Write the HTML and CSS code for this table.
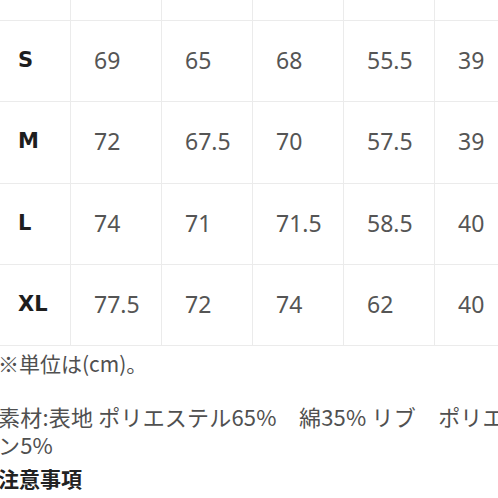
FILE: index.html
```html
<!DOCTYPE html>
<html lang="ja">
<head>
<meta charset="utf-8">
<title>サイズ表</title>
<link rel="stylesheet" href="styles.css">
</head>
<body>
<div class="sheet">
  <div class="size-table">
    <div class="row head">
      <div class="cell"></div><div class="cell"></div><div class="cell"></div><div class="cell"></div><div class="cell"></div><div class="cell"></div>
    </div>
    <div class="row">
      <div class="cell size">S</div><div class="cell">69</div><div class="cell">65</div><div class="cell">68</div><div class="cell">55.5</div><div class="cell">39</div>
    </div>
    <div class="row">
      <div class="cell size">M</div><div class="cell">72</div><div class="cell">67.5</div><div class="cell">70</div><div class="cell">57.5</div><div class="cell">39</div>
    </div>
    <div class="row">
      <div class="cell size">L</div><div class="cell">74</div><div class="cell">71</div><div class="cell">71.5</div><div class="cell">58.5</div><div class="cell">40</div>
    </div>
    <div class="row">
      <div class="cell size">XL</div><div class="cell">77.5</div><div class="cell">72</div><div class="cell">74</div><div class="cell">62</div><div class="cell">40</div>
    </div>
  </div>
  <p class="note">※単位は(cm)。</p>
  <p class="material">素材:表地 ポリエステル65%　綿35% リブ　ポリエステル95%　ポリウレタ<br>ン5%</p>
  <p class="caution">注意事項</p>
</div>
</body>
</html>
```
FILE: styles.css
```css
html, body {
  margin: 0;
  padding: 0;
  background: #ffffff;
  overflow: hidden;
}
body {
  width: 498px;
  height: 498px;
  font-family: "Noto Sans CJK JP", "Noto Sans", sans-serif;
}
.sheet {
  width: 498px;
  overflow: hidden;
}
.size-table {
  display: flex;
  flex-direction: column;
  width: 600px;
}
.row {
  display: grid;
  grid-template-columns: 71px repeat(5, 91px);
  height: 80.25px;
  border-bottom: 1px solid #ebebeb;
}
.row.head {
  height: 20px;
}
.cell {
  display: flex;
  align-items: center;
  padding: 0 0 2px 23px;
  border-right: 1px solid #ebebeb;
  box-sizing: border-box;
  font-family: "Noto Sans", "Noto Sans CJK JP", sans-serif;
  font-size: 23px;
  color: #555555;
}
.cell.size {
  padding-left: 18px;
  font-family: "DejaVu Sans", sans-serif;
  font-size: 21px;
  font-weight: 700;
  color: #1e1e1e;
}
.note, .material, .caution {
  margin: 0 0 0 -2px;
  font-size: 21px;
  line-height: 28px;
  color: #505050;
  white-space: nowrap;
}
.note {
  margin-top: 3px;
}
.material {
  margin-top: 25px;
  font-size: 22px;
  letter-spacing: 0.2px;
}
.caution {
  margin-top: 6px;
  font-weight: 700;
  color: #222222;
}
```
